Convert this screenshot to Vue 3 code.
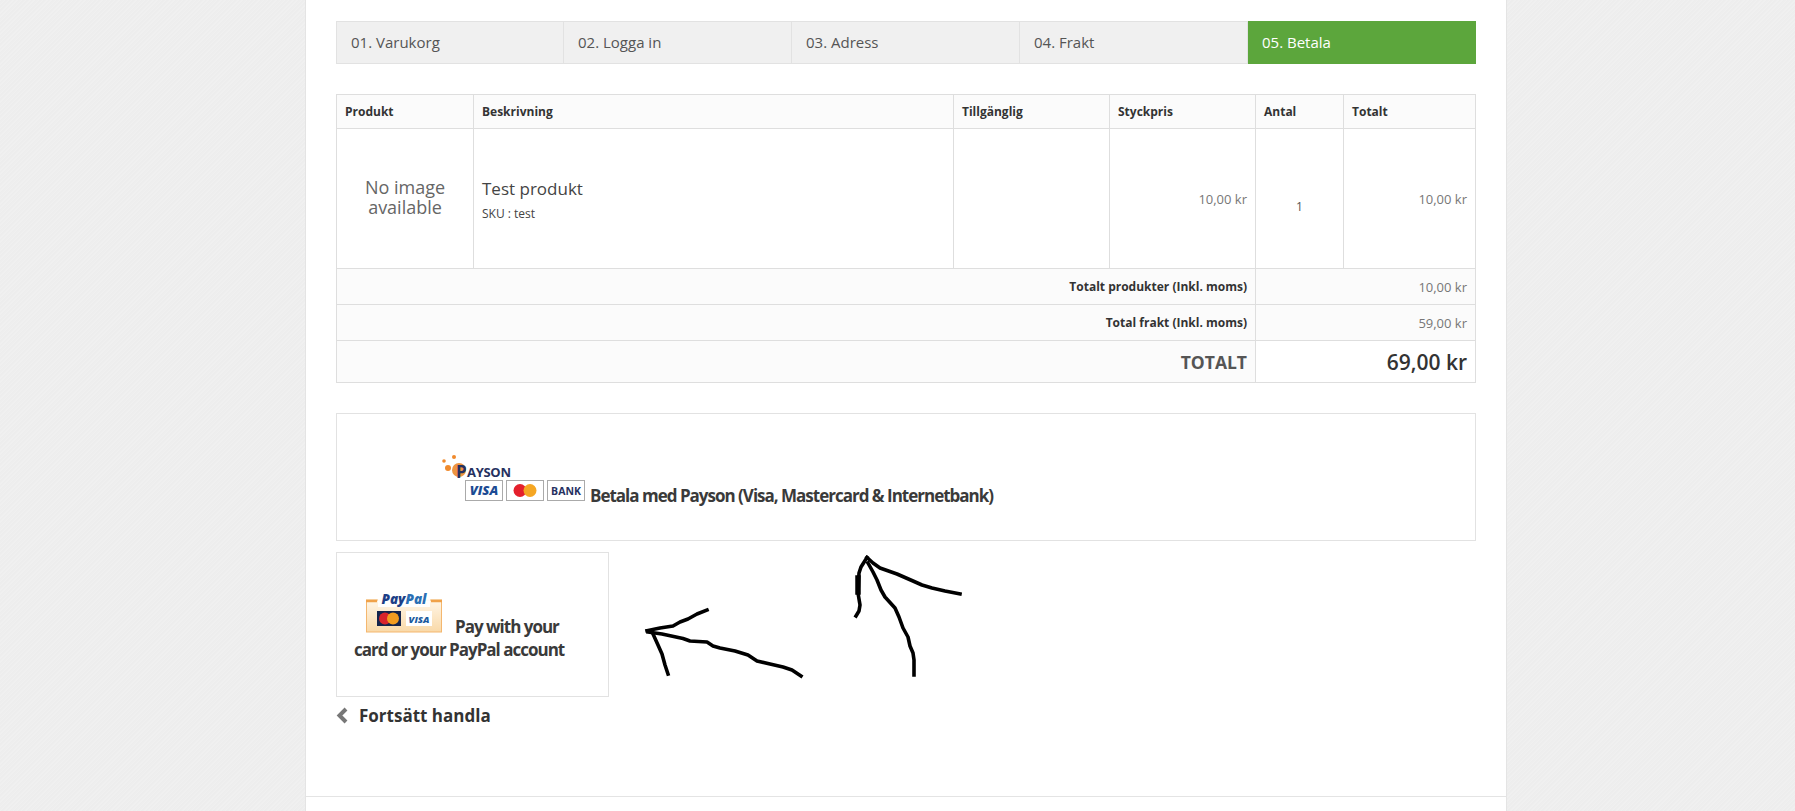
<script setup>
const steps = [
  { label: '01. Varukorg' },
  { label: '02. Logga in' },
  { label: '03. Adress' },
  { label: '04. Frakt' },
  { label: '05. Betala', active: true }
]
const heads = ['Produkt', 'Beskrivning', 'Tillgänglig', 'Styckpris', 'Antal', 'Totalt']
</script>

<template>
  <div class="page">
    <main class="sheet">
      <ul class="steps">
        <li v-for="s in steps" :key="s.label" class="step" :class="{ active: s.active }">{{ s.label }}</li>
      </ul>

      <table class="cart">
        <colgroup>
          <col class="c1" /><col class="c2" /><col class="c3" /><col class="c4" /><col class="c5" /><col class="c6" />
        </colgroup>
        <thead>
          <tr>
            <th v-for="h in heads" :key="h">{{ h }}</th>
          </tr>
        </thead>
        <tbody>
          <tr class="item">
            <td class="noimg"><div>No image</div><div>available</div></td>
            <td class="desc">
              <div class="name">Test produkt</div>
              <div class="sku">SKU : test</div>
            </td>
            <td></td>
            <td class="price">10,00 kr</td>
            <td class="qty">1</td>
            <td class="price">10,00 kr</td>
          </tr>
        </tbody>
        <tfoot>
          <tr class="sum">
            <td colspan="4" class="lab">Totalt produkter (Inkl. moms)</td>
            <td colspan="2" class="val">10,00 kr</td>
          </tr>
          <tr class="sum">
            <td colspan="4" class="lab">Total frakt (Inkl. moms)</td>
            <td colspan="2" class="val">59,00 kr</td>
          </tr>
          <tr class="grand">
            <td colspan="4" class="lab">TOTALT</td>
            <td colspan="2" class="val">69,00 kr</td>
          </tr>
        </tfoot>
      </table>

      <a class="pay payson">
        <svg class="payson-logo" width="145" height="50" viewBox="0 0 145 50">
          <circle cx="3" cy="9" r="1.8" fill="#f08a2c" />
          <circle cx="13" cy="5" r="2" fill="#f08a2c" />
          <circle cx="7" cy="16" r="3" fill="#f08a2c" />
          <circle cx="18" cy="18" r="7" fill="#ee9440" />
          <text x="15" y="26" class="pl-p">P</text>
          <text x="26" y="24.500" class="pl-word">AYSON</text>
          <rect x="24.500" y="28.500" width="37" height="20" fill="#fff" stroke="#aaa" />
          <text x="43" y="43" class="pl-visa">VISA</text>
          <rect x="65.500" y="28.500" width="37" height="20" fill="#fff" stroke="#aaa" />
          <circle cx="79" cy="38.500" r="6.500" fill="#e4202c" />
          <circle cx="89" cy="38.500" r="6.500" fill="#f5a623" />
          <rect x="106.500" y="28.500" width="37" height="20" fill="#fff" stroke="#aaa" />
          <text x="125" y="42.500" class="pl-bank">BANK</text>
        </svg>
        <span>Betala med Payson (Visa, Mastercard &amp; Internetbank)</span>
      </a>

      <a class="pay paypal">
        <svg class="paypal-logo" width="77" height="40" viewBox="0 0 77 40">
          <defs>
            <linearGradient id="ppbg" x1="0" y1="0" x2="0" y2="1">
              <stop offset="0" stop-color="#fff6e8" />
              <stop offset="1" stop-color="#f9d9a8" />
            </linearGradient>
          </defs>
          <rect x="0.500" y="7" width="75" height="32" fill="url(#ppbg)" stroke="#f4b76f" />
          <rect x="12" y="0" width="52" height="14" fill="#fff" opacity="0.9" />
          <path d="M0 8H11M65 8H76" stroke="#f0a24a" stroke-width="2.500" />
          <text x="38" y="11" class="pp-word"><tspan fill="#1d3f87">Pay</tspan><tspan fill="#2a6fb4">Pal</tspan></text>
          <rect x="11" y="18" width="24" height="15" fill="#14244c" />
          <circle cx="19" cy="25.500" r="6" fill="#d8232c" />
          <circle cx="27" cy="25.500" r="6" fill="#f39c1f" />
          <rect x="40" y="18" width="26" height="15" fill="#fff" />
          <text x="53" y="29.500" class="pp-visa">VISA</text>
        </svg>
        <span class="pp-first">Pay with your</span><br />card or your PayPal account
      </a>

      <a class="back">
        <svg width="13" height="17" viewBox="0 0 13 17"><path d="M10 2 3.500 8.500 10 15" fill="none" stroke="#777" stroke-width="4" /></svg>
        <span>Fortsätt handla</span>
      </a>

      <footer class="foot"></footer>
    </main>

    <svg class="scribble" width="1795" height="811" viewBox="0 0 1795 811">
      <g fill="none" stroke="#000" stroke-width="3.600" stroke-linejoin="round" stroke-linecap="square">
        <path d="M647 630.700L660 628L673 626L680 622L688 619L697 614L707 610" />
        <path d="M648 632L662 634L683 638.500L690 641L707 642L713 646L720 648L735 651L748 655L757 661L770 664L783 667L792 670L801 676" />
        <path d="M653 634L658 645L662 654L665 665L668 674" />
        <path d="M867 557.500L873 563L880 568L897 574L913 581L922 585L932 588L945 591L960 594" />
        <path d="M868 563L873 572L877 580L881 590L885 597L895 608L899 617L903 628L908 637L910 646L913 653L914 660V675" />
        <path d="M867 557.500L861 567L859 573L858 593L860 605L859 611L856 616" />
        <path d="M858 578V592" stroke-width="5.500" />
      </g>
    </svg>
  </div>
</template>

<style scoped>
.page {
  position: relative;
  height: 811px;
  overflow: hidden;
  box-sizing: border-box;
  padding-left: 305px;
  font-family: "Open Sans", "Noto Sans", sans-serif;
  color: #333;
  background-color: #eeeeee;
  background-image: repeating-linear-gradient(135deg, #f0f0f0 0 1px, #ededed 1px 2px, #eeeeee 2px 3px);
}
.sheet {
  width: 1202px;
  height: 811px;
  box-sizing: border-box;
  background: #fff;
  border-left: 1px solid #e4e4e4;
  border-right: 1px solid #e4e4e4;
  padding: 21px 30px 0;
}
.steps {
  display: grid;
  grid-template-columns: repeat(5, 1fr);
  list-style: none;
  margin: 0;
  padding: 0;
  height: 43px;
  box-sizing: border-box;
}
.step {
  background: #f0f0f0;
  border: 1px solid #e2e2e2;
  border-left-width: 0;
  padding-left: 14px;
  font-size: 15px;
  line-height: 41px;
  color: #555;
}
.step:first-child { border-left-width: 1px; }
.step.active {
  background: #5ca63c;
  border-color: #5ca63c;
  color: #fff;
}
.cart {
  width: 1139px;
  margin-top: 30px;
  border-collapse: collapse;
  table-layout: fixed;
  font-size: 12px;
}
.c1 { width: 137px; }
.c2 { width: 480px; }
.c3 { width: 156px; }
.c4 { width: 146px; }
.c5 { width: 88px; }
.c6 { width: 132px; }
th, td { border: 1px solid #dedede; padding: 0 8px; box-sizing: border-box; }
th {
  height: 34px;
  background: #fbfbfb;
  text-align: left;
  font-weight: 700;
  font-size: 12px;
  color: #333;
}
.item td { height: 140px; }
.noimg { text-align: center; font-size: 18px; line-height: 20px; color: #666; padding-bottom: 3px; }
.desc { padding-top: 1px; }
.name { font-size: 17px; line-height: 24px; color: #444; }
.sku { font-size: 12px; line-height: 17px; margin-top: 4px; color: #444; }
.price { text-align: right; color: #777; font-size: 13px; }
.qty { text-align: center; font-size: 12px; color: #555; padding-top: 16px; }
.sum td { height: 36px; background: #fbfbfb; }
.lab { text-align: right; font-weight: 700; color: #333; }
.val { text-align: right; color: #777; font-size: 13px; }
.grand td { height: 42px; }
.grand .lab { background: #fbfbfb; font-size: 17.500px; font-weight: 700; color: #555; }
.grand .val { font-size: 21px; font-weight: 600; color: #333; }
.pay {
  display: block;
  box-sizing: border-box;
  background: #fff;
  border: 1px solid #e2e2e2;
  font-size: 17px;
  font-weight: 700;
  letter-spacing: -1px;
  color: #3a3a3a;
}
.payson {
  margin-top: 30px;
  height: 128px;
  padding: 38px 0 0 104px;
}
.payson-logo { vertical-align: baseline; margin-right: 4px; overflow: visible; }
.paypal {
  margin-top: 11px;
  width: 273px;
  height: 145px;
  padding: 40px 0 0 17px;
  line-height: 23px;
}
.paypal-logo { margin: 0 12px 0 12px; vertical-align: baseline; overflow: visible; }
.pl-p { font: 700 17px "Open Sans", sans-serif; fill: #26315f; letter-spacing: 0; }
.pl-word { font: 700 13px "Open Sans", sans-serif; fill: #26315f; letter-spacing: -0.300px; }
.pl-visa { font: italic 800 13px "Open Sans", sans-serif; fill: #1c4b94; text-anchor: middle; letter-spacing: 0; }
.pl-bank { font: 700 10.500px "Open Sans", sans-serif; fill: #26315f; text-anchor: middle; letter-spacing: 0; }
.pp-word { font: italic 800 13.500px "Open Sans", sans-serif; text-anchor: middle; letter-spacing: 0; }
.pp-visa { font: italic 800 9.500px "Open Sans", sans-serif; fill: #1c5a9e; text-anchor: middle; letter-spacing: 0; }
.back {
  display: flex;
  align-items: center;
  gap: 10px;
  margin-top: 8px;
  height: 20px;
  font-size: 17px;
  font-weight: 700;
  color: #333;
}
.foot {
  margin: 71px -30px 0;
  border-top: 1px solid #e4e4e4;
}
.scribble { position: absolute; left: 0; top: 0; pointer-events: none; }
</style>
